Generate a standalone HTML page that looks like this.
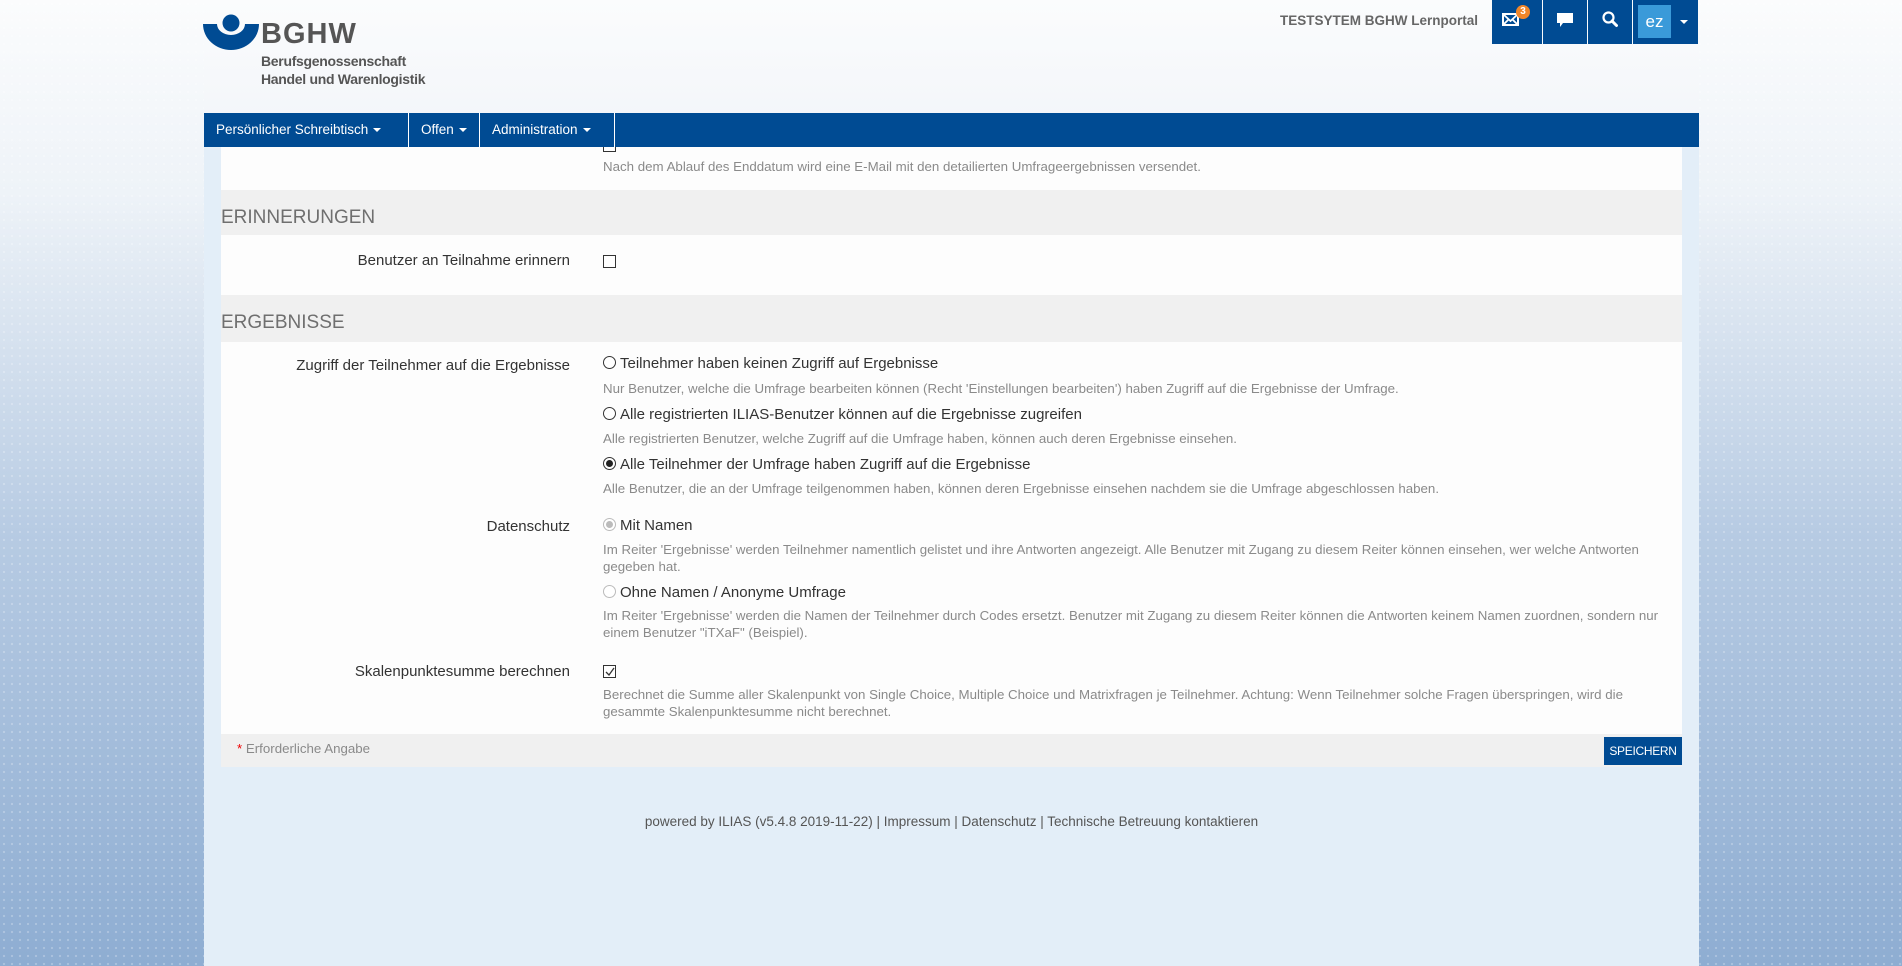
<!DOCTYPE html>
<html><head><meta charset="utf-8"><style>
*{margin:0;padding:0;box-sizing:border-box}
body{width:1902px;height:966px;overflow:hidden;position:relative;font-family:"Liberation Sans Narrow","Liberation Sans",sans-serif;
background:radial-gradient(circle,rgba(255,255,255,.25) 1px,transparent 1.3px) 0 0/8px 8px,linear-gradient(180deg,#fbfcfd 0%,#eef3f8 20%,#b7cbe3 55%,#8eadd2 100%);}
.abs{position:absolute}
#cont{left:204px;top:0;width:1495px;height:966px;background:linear-gradient(180deg,#fbfcfd 0,#f2f5f9 140px,#e3eef8 150px,#e3eef8 100%)}
#panel{left:221px;top:146px;width:1461px;height:621px;background:#fdfdfd}
.sec{left:221px;width:1461px;background:#f0f0f0}
.sech{font-family:"Liberation Sans",sans-serif;font-size:19px;color:#6f6f6f;left:221px}
.lbl{right:1332px;font-size:15px;color:#333;text-align:right;white-space:nowrap}
.opt{left:603px;font-size:15px;color:#333;white-space:nowrap}
.desc{left:603px;font-size:13.3px;color:#8a8a8a;line-height:17px;white-space:nowrap}
.cb{width:13px;height:13px;border:1px solid #333;background:#fff}
.rd{width:13px;height:13px;border:1px solid #333;border-radius:50%;background:#fff;display:inline-block;vertical-align:-1px;margin-right:4px;position:relative}
.rd.on::after{content:"";position:absolute;left:2px;top:2px;width:7px;height:7px;border-radius:50%;background:#222}
.rd.dis{border-color:#bbb}
.rd.dis.on::after{background:#bbb}
#nav{left:204px;top:113px;width:1495px;height:34px;background:#004b93}
.ni{position:absolute;top:0;height:34px;color:#fff;font-family:"Liberation Sans",sans-serif;font-size:13.5px;line-height:34px;padding-left:12px;border-right:1px solid #fff}
.car{display:inline-block;border-left:4px solid transparent;border-right:4px solid transparent;border-top:4px solid #fff;vertical-align:2px;margin-left:5px}
.ib{top:0;height:44px;background:#004b93}
</style></head><body>
<div class="abs" id="cont"></div>
<svg class="abs" style="left:203px;top:14px" width="56" height="36" viewBox="0 0 56 36">
<circle cx="28" cy="9" r="8.5" fill="#004b93"/>
<path d="M0 10 H14 A14 11 0 0 0 42 10 H56 A28 26 0 0 1 0 10Z" fill="#004b93"/>
</svg>
<div class="abs" style="left:261px;top:18px;font-family:'Liberation Sans',sans-serif;font-weight:bold;font-size:29px;color:#555;letter-spacing:1px">BGHW</div>
<div class="abs" style="left:261px;top:52px;font-family:'Liberation Sans',sans-serif;font-size:14px;color:#555;line-height:18px;font-weight:bold;letter-spacing:-0.3px">Berufsgenossenschaft<br>Handel und Warenlogistik</div>
<div class="abs" style="left:1280px;top:13px;font-family:'Liberation Sans',sans-serif;font-weight:bold;font-size:13.5px;color:#666">TESTSYTEM BGHW Lernportal</div>
<div class="abs ib" style="left:1492px;width:50px"></div>
<div class="abs ib" style="left:1543px;width:44px"></div>
<div class="abs ib" style="left:1588px;width:44px"></div>
<div class="abs ib" style="left:1633px;width:65px"></div>
<svg class="abs" style="left:1502px;top:13px" width="18" height="13" viewBox="0 0 18 13"><rect x="1" y="1" width="15" height="11" fill="none" stroke="#fff" stroke-width="2"/><path d="M1 1 L8.5 8 L16 1 M1 12 L7 6 M16 12 L10 6" stroke="#fff" stroke-width="1.8" fill="none"/></svg>
<div class="abs" style="left:1516px;top:5px;width:14px;height:14px;border-radius:50%;background:#f0862a;color:#fff;font-size:10px;font-weight:bold;text-align:center;line-height:14px;font-family:'Liberation Sans',sans-serif">3</div>
<svg class="abs" style="left:1557px;top:13px" width="16" height="15" viewBox="0 0 16 15"><path d="M0 0H16V10H6L3 14V10H0Z" fill="#fff"/></svg>
<svg class="abs" style="left:1602px;top:11px" width="16" height="17" viewBox="0 0 16 17"><circle cx="6.5" cy="6.5" r="5" fill="none" stroke="#fff" stroke-width="2.2"/><path d="M10 10 L14.5 14.5" stroke="#fff" stroke-width="3" stroke-linecap="round"/></svg>
<div class="abs" style="left:1638px;top:5px;width:33px;height:33px;background:#3a9ad9;color:#fff;font-family:'Liberation Sans',sans-serif;font-size:17px;text-align:center;line-height:33px">ez</div>
<div class="abs" style="left:1680px;top:20px;border-left:4px solid transparent;border-right:4px solid transparent;border-top:4px solid #fff"></div>

<div class="abs" id="panel"></div>
<div class="abs sec" style="top:190px;height:45px"></div>
<div class="abs sec" style="top:295px;height:47px"></div>
<div class="abs sec" style="top:734px;height:33px"></div>

<div class="abs cb" style="left:603px;top:139px"></div>
<div class="abs desc" style="top:158px">Nach dem Ablauf des Enddatum wird eine E-Mail mit den detailierten Umfrageergebnissen versendet.</div>
<div class="abs sech" style="top:207px">ERINNERUNGEN</div>
<div class="abs lbl" style="top:252px">Benutzer an Teilnahme erinnern</div>
<div class="abs cb" style="left:603px;top:255px"></div>
<div class="abs sech" style="top:312px">ERGEBNISSE</div>
<div class="abs lbl" style="top:357px">Zugriff der Teilnehmer auf die Ergebnisse</div>
<div class="abs opt" style="top:355px"><span class="rd"></span>Teilnehmer haben keinen Zugriff auf Ergebnisse</div>
<div class="abs desc" style="top:380px">Nur Benutzer, welche die Umfrage bearbeiten können (Recht 'Einstellungen bearbeiten') haben Zugriff auf die Ergebnisse der Umfrage.</div>
<div class="abs opt" style="top:406px"><span class="rd"></span>Alle registrierten ILIAS-Benutzer können auf die Ergebnisse zugreifen</div>
<div class="abs desc" style="top:430px">Alle registrierten Benutzer, welche Zugriff auf die Umfrage haben, können auch deren Ergebnisse einsehen.</div>
<div class="abs opt" style="top:456px"><span class="rd on"></span>Alle Teilnehmer der Umfrage haben Zugriff auf die Ergebnisse</div>
<div class="abs desc" style="top:480px">Alle Benutzer, die an der Umfrage teilgenommen haben, können deren Ergebnisse einsehen nachdem sie die Umfrage abgeschlossen haben.</div>
<div class="abs lbl" style="top:518px">Datenschutz</div>
<div class="abs opt" style="top:517px"><span class="rd dis on"></span>Mit Namen</div>
<div class="abs desc" style="top:541px">Im Reiter 'Ergebnisse' werden Teilnehmer namentlich gelistet und ihre Antworten angezeigt. Alle Benutzer mit Zugang zu diesem Reiter können einsehen, wer welche Antworten<br>gegeben hat.</div>
<div class="abs opt" style="top:584px"><span class="rd dis"></span>Ohne Namen / Anonyme Umfrage</div>
<div class="abs desc" style="top:607px">Im Reiter 'Ergebnisse' werden die Namen der Teilnehmer durch Codes ersetzt. Benutzer mit Zugang zu diesem Reiter können die Antworten keinem Namen zuordnen, sondern nur<br>einem Benutzer "iTXaF" (Beispiel).</div>
<div class="abs lbl" style="top:663px">Skalenpunktesumme berechnen</div>
<div class="abs cb" style="left:603px;top:665px"></div>
<svg class="abs" style="left:605px;top:667px" width="10" height="10" viewBox="0 0 10 10"><path d="M1 5 L4 8 L9 1" stroke="#333" stroke-width="1.3" fill="none"/></svg>
<div class="abs desc" style="top:686px">Berechnet die Summe aller Skalenpunkt von Single Choice, Multiple Choice und Matrixfragen je Teilnehmer. Achtung: Wenn Teilnehmer solche Fragen überspringen, wird die<br>gesammte Skalenpunktesumme nicht berechnet.</div>
<div class="abs" style="left:237px;top:741px;font-size:13.3px;color:#8a8a8a"><span style="color:#e00">*</span> Erforderliche Angabe</div>
<div class="abs" style="left:1604px;top:737px;width:78px;height:28px;background:#004b93;color:#fff;font-size:12px;text-align:center;line-height:28px;letter-spacing:-0.3px">SPEICHERN</div>
<div class="abs" style="left:204px;width:1495px;top:814px;text-align:center;font-size:13.5px;color:#555">powered by ILIAS (v5.4.8 2019-11-22) | Impressum | Datenschutz | Technische Betreuung kontaktieren</div>

<div class="abs" id="nav">
<div class="ni" style="left:0;width:205px">Persönlicher Schreibtisch<span class="car"></span></div>
<div class="ni" style="left:205px;width:71px">Offen<span class="car"></span></div>
<div class="ni" style="left:276px;width:135px">Administration<span class="car"></span></div>
</div>
</body></html>
